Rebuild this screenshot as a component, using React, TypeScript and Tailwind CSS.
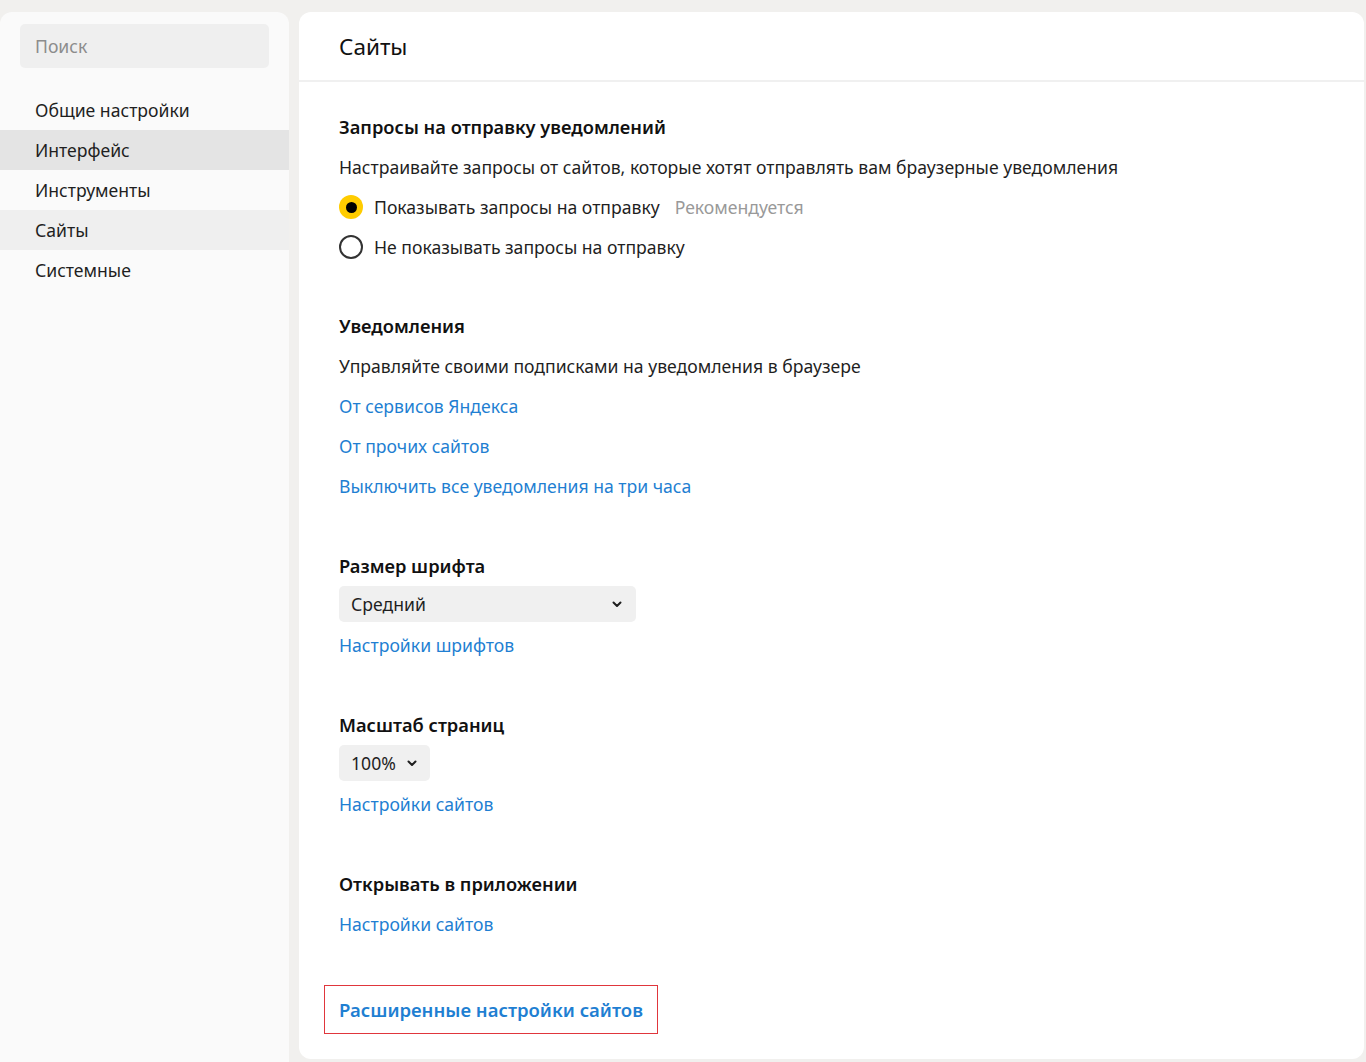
import React, { useState } from "react";

const font = { fontFamily: '"Noto Sans", "Open Sans", sans-serif' };

const navItems = ["Общие настройки", "Интерфейс", "Инструменты", "Сайты", "Системные"];

const Chevron = () => (
  <svg width="10" height="7" viewBox="0 0 10 7" fill="none">
    <path d="M1.5 1.5L5 5L8.5 1.5" stroke="#1f1f1f" strokeWidth="2" strokeLinecap="round" strokeLinejoin="round" />
  </svg>
);

const Radio = ({ checked }: { checked: boolean }) =>
  checked ? (
    <span className="flex h-6 w-6 items-center justify-center rounded-full bg-[#fc0]">
      <span className="h-[11px] w-[11px] rounded-full bg-black" />
    </span>
  ) : (
    <span className="h-6 w-6 rounded-full border-2 border-[#333]" />
  );

const Link = ({ children }: { children: React.ReactNode }) => (
  <div className="flex h-10 items-center">
    <a className="cursor-pointer text-[#1f7fd2]">{children}</a>
  </div>
);

const Title = ({ children }: { children: React.ReactNode }) => (
  <div className="flex h-10 items-center text-[18.3px] font-semibold text-[#111]">{children}</div>
);

export default function App() {
  const [showRequests, setShowRequests] = useState(true);

  return (
    <div className="flex h-[1062px] w-[1366px] overflow-hidden bg-[#f1f0ee] pt-3 text-[17.6px] text-[#1f1f1f]" style={font}>
      {/* sidebar */}
      <aside className="h-[1100px] w-[289px] shrink-0 rounded-t-[12px] bg-[#fafafa] pt-3">
        <div className="mx-5 flex h-[44px] items-center rounded-[5px] bg-[#efefef] px-[15px] pt-[1px] text-[#8c8c8c]">Поиск</div>
        <nav className="mt-[22px]">
          {navItems.map((item) => (
            <div
              key={item}
              className={
                "flex h-10 items-center px-[35px] pt-[1px] " +
                (item === "Интерфейс" ? "bg-[#e4e4e4]" : item === "Сайты" ? "bg-[#efefef]" : "")
              }
            >
              {item}
            </div>
          ))}
        </nav>
      </aside>

      {/* main */}
      <main className="ml-[10px] mr-[2px] h-[1047px] flex-1 rounded-[12px] bg-white">
        <header className="flex h-[70px] items-center border-b-2 border-[#f0f0f0] px-10 pt-[1px] text-[22.5px] text-[#111]">Сайты</header>

        <div className="px-10 pt-[25px]">
          <section>
            <Title>Запросы на отправку уведомлений</Title>
            <div className="flex h-10 items-center">
              Настраивайте запросы от сайтов, которые хотят отправлять вам браузерные уведомления
            </div>
            <div className="flex h-10 cursor-pointer items-center gap-[11px]" onClick={() => setShowRequests(true)}>
              <Radio checked={showRequests} />
              <span>Показывать запросы на отправку</span>
              <span className="ml-[4px] text-[#999]">Рекомендуется</span>
            </div>
            <div className="flex h-10 cursor-pointer items-center gap-[11px]" onClick={() => setShowRequests(false)}>
              <Radio checked={!showRequests} />
              <span>Не показывать запросы на отправку</span>
            </div>
          </section>

          <section className="mt-[39px]">
            <Title>Уведомления</Title>
            <div className="flex h-10 items-center">Управляйте своими подписками на уведомления в браузере</div>
            <Link>От сервисов Яндекса</Link>
            <Link>От прочих сайтов</Link>
            <Link>Выключить все уведомления на три часа</Link>
          </section>

          <section className="mt-10">
            <Title>Размер шрифта</Title>
            <div className="flex h-9 w-[297px] items-center justify-between rounded-[5px] bg-[#f0f0f0] pl-3 pr-[14px]">
              <span>Средний</span>
              <Chevron />
            </div>
            <div className="mt-[3px]">
              <Link>Настройки шрифтов</Link>
            </div>
          </section>

          <section className="mt-10">
            <Title>Масштаб страниц</Title>
            <div className="flex h-9 w-[91px] items-center gap-[11px] rounded-[5px] bg-[#f0f0f0] pl-3">
              <span>100%</span>
              <Chevron />
            </div>
            <div className="mt-[3px]">
              <Link>Настройки сайтов</Link>
            </div>
          </section>

          <section className="mt-10">
            <Title>Открывать в приложении</Title>
            <Link>Настройки сайтов</Link>
          </section>

          <div className="-ml-[15px] mt-[41px] flex h-[49px] w-[334px] items-center border-[1.5px] border-[#e0363c] pl-[14px] text-[18.5px] font-semibold text-[#1f7fd2]">
            Расширенные настройки сайтов
          </div>
        </div>
      </main>
    </div>
  );
}
